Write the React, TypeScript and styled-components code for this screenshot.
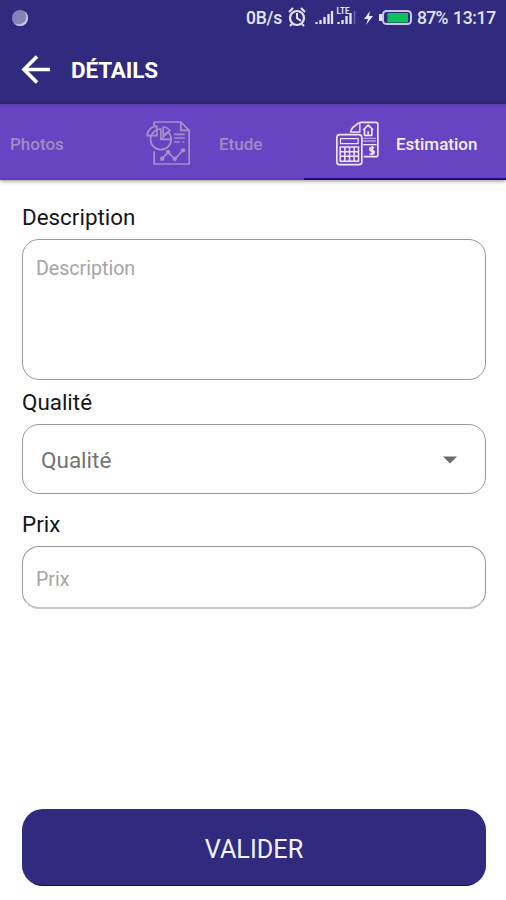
import React from "react";
import styled, { createGlobalStyle } from "styled-components";

const GlobalStyle = createGlobalStyle`
  * { box-sizing: border-box; }
  body { margin: 0; background: #fefefe; font-family: Roboto, "Liberation Sans", sans-serif; }
  button, textarea, input { font-family: inherit; }
`;

const Screen = styled.main`
  width: 506px;
  height: 900px;
  display: flex;
  flex-direction: column;
  overflow: hidden;
  background: #fefefe;
`;

const StatusBar = styled.div`
  height: 36px;
  flex: none;
  display: flex;
  align-items: center;
  padding: 0 11px 0 12px;
  background: #302b7e;
  color: #e6e5f6;
  font-size: 17.5px;
  font-weight: 500;
`;

const StatusDot = styled.span`
  width: 16px;
  height: 16px;
  margin-right: auto;
  border-radius: 50%;
  background: #8583b5;
  box-shadow: inset -1.5px -1.5px 1px #cfcfe8;
`;

const StatusText = styled.span<{ $width: number; $spacing?: number }>`
  width: ${(p) => p.$width}px;
  flex: none;
  white-space: nowrap;
  letter-spacing: ${(p) => p.$spacing ?? 0}px;
`;

const StatusIcons = styled.svg`
  width: 135px;
  height: 36px;
  flex: none;
`;

const AppBar = styled.header`
  height: 68px;
  flex: none;
  display: flex;
  align-items: center;
  padding-left: 21px;
  background: #302b7e;
`;

const BackButton = styled.button`
  width: 50px;
  height: 30px;
  padding: 0;
  border: 0;
  background: none;
  text-align: left;
  svg { display: block; }
`;

const Title = styled.h1`
  margin: 0;
  color: #fff;
  font-size: 22.5px;
  font-weight: 700;
  letter-spacing: -0.15px;
`;

const Tabs = styled.nav`
  height: 76px;
  flex: none;
  display: flex;
  background: linear-gradient(#5a3db0, #6745c2 4px);
  box-shadow: 0 1px 4px rgba(0, 0, 0, 0.45);
`;

const Tab = styled.div<{ $width: number; $indent: number; $active?: boolean }>`
  width: ${(p) => p.$width}px;
  flex: none;
  display: flex;
  align-items: center;
  padding: 4px 0 0 ${(p) => p.$indent}px;
  border-bottom: 2px solid ${(p) => (p.$active ? "#1c0c80" : "#5f3cc0")};
  color: ${(p) => (p.$active ? "#f4effd" : "#a18ac5")};
  font-size: 17px;
  font-weight: 500;
  white-space: nowrap;
`;

const TabLabel = styled.span`
  padding-top: 2px;
`;

const TabIcon = styled.svg<{ $gap: number }>`
  width: 45px;
  height: 46px;
  flex: none;
  margin-right: ${(p) => p.$gap}px;
`;

const Form = styled.form`
  flex: 1;
  display: flex;
  flex-direction: column;
  padding: 23px 21px 14px 22px;
`;

const Label = styled.label`
  height: 36px;
  padding-top: 1px;
  line-height: 26px;
  font-size: 22.4px;
  color: #161616;
`;

const Description = styled.textarea`
  width: 464px;
  height: 141px;
  padding: 17px 13px;
  border: 1px solid #999;
  border-radius: 17px;
  background: transparent;
  resize: none;
  font-size: 19.6px;
  line-height: 24px;
  &::placeholder { color: #a5a5a5; opacity: 1; }
`;

const Select = styled.div`
  height: 70px;
  width: 464px;
  display: flex;
  align-items: center;
  justify-content: space-between;
  padding: 2px 28px 0 18px;
  border: 1px solid #999;
  border-radius: 17px;
  color: #747474;
  font-size: 22.5px;
`;

const Price = styled.input`
  width: 464px;
  height: 63px;
  padding: 4px 13px 0;
  border: 1px solid #999;
  border-bottom: 2px solid #c4c4c4;
  border-radius: 17px;
  background: transparent;
  font-size: 19.6px;
  &::placeholder { color: #a5a5a5; opacity: 1; }
`;

const Field = styled.div<{ $height: number }>`
  height: ${(p) => p.$height}px;
  display: flex;
  flex-direction: column;
`;

const Submit = styled.button`
  width: 464px;
  height: 77px;
  margin-top: auto;
  padding: 4px 0 0;
  border: 0;
  border-bottom: 1px solid #160a69;
  border-radius: 21px;
  background: #302b7e;
  color: #f4f3ff;
  font-size: 25.2px;
`;

const StudyIcon = () => (
  <TabIcon $gap={28} viewBox="48 44 134 138" fill="none" stroke="#a78fc9" strokeWidth="5.2" strokeLinejoin="round">
    <path d="M72 62V50h80l25 25v101H72v-38M152 50v25h25" />
    <path d="M92 71a31 31 0 1 0 31 31H92z" />
    <path d="M92 102l22-22a31 31 0 0 1 9 22M99 90V65q14 1 20 11z" />
    <path d="M80 91H51q2-26 29-29z" />
    <path d="M132 87h32M132 98h32M132 110h18M157 110h5" />
    <path d="M96 160l18-19 20 20 24-26" />
    <g fill="#a78fc9" stroke="none">
      <circle cx="96" cy="160" r="6.5" /><circle cx="114" cy="140" r="6.5" />
      <circle cx="134" cy="161" r="6.5" /><circle cx="159" cy="135" r="6.5" />
    </g>
  </TabIcon>
);

const EstimateIcon = () => (
  <TabIcon $gap={16} viewBox="46 42 134 138" fill="none" stroke="#efe6fc" strokeWidth="5" strokeLinejoin="round">
    <rect x="51" y="86" width="75" height="90" rx="9" />
    <rect x="62" y="98" width="53" height="15" strokeWidth="3.5" />
    <path d="M61 123h55v43H61zM75 123v43M89 123v43M103 123v43M61 137h55M61 151h55" strokeWidth="4.5" />
    <path d="M92 80q2-14 13-20 11-11 20-11h43q6 0 6 6v91q0 6-6 6h-36" />
    <path d="M94 78h26V54" strokeWidth="4" />
    <path d="M130 72l15-15 15 15M134 70v18h22V70M145 76v9" />
    <path d="M130 97h38M130 105h38" strokeWidth="4" stroke="#b9a2e3" />
    <path d="M130 116h40" strokeWidth="4" />
    <path d="M163 125h-7q-6 0-6 4.5t6 4.5q7 0 7 5t-7 5h-7M157 120v28" />
  </TabIcon>
);

export default function App() {
  return (
    <Screen>
      <GlobalStyle />
      <StatusBar>
        <StatusDot />
        <StatusText $width={36} $spacing={-0.2}>0B/s</StatusText>
        <StatusIcons viewBox="282 0 135 36" fill="none" stroke="#e6e5f6">
          <circle cx="297" cy="18" r="7" strokeWidth="2.2" />
          <path d="M297 13v5l4 3M289 12l4-4M301 8l4 4M292 24l-2 2M302 24l2 2" strokeWidth="2" />
          <path d="M316.5 24v-2M320.5 24v-4M324.5 24v-7M328.5 24v-10M332 24V11" strokeWidth="2.3" />
          <path d="M338.5 24v-2M342.5 24v-4M346.5 24v-8M350.5 24V13" strokeWidth="2.3" />
          <path d="M354.5 24V11" stroke="#6b67a6" strokeWidth="1.5" />
          <text x="336.5" y="14" fill="#e6e5f6" stroke="none" fontSize="9.5" fontWeight="700" textLength="13" lengthAdjust="spacingAndGlyphs">LTE</text>
          <path d="M370 11l-6 8h4l-2 6 7-9h-4z" fill="#e6e5f6" stroke="none" />
          <rect x="383" y="11" width="28" height="13" rx="3.5" strokeWidth="2" stroke="#c9c9e6" />
          <rect x="387.5" y="13" width="20.5" height="9.5" fill="#0cc158" stroke="none" />
          <path d="M380.5 14v7" strokeWidth="3" />
        </StatusIcons>
        <StatusText $width={36} $spacing={-0.7}>87%</StatusText>
        <StatusText $width={42} $spacing={-0.3}>13:17</StatusText>
      </StatusBar>
      <AppBar>
        <BackButton type="button" aria-label="Retour">
          <svg width="30" height="30" viewBox="0 0 30 30" fill="none" stroke="#fff" strokeWidth="3.6">
            <path d="M29 14.5H3M16 1.5L3 14.5l13 13" />
          </svg>
        </BackButton>
        <Title>DÉTAILS</Title>
      </AppBar>
      <Tabs>
        <Tab $width={102} $indent={10}><TabLabel>Photos</TabLabel></Tab>
        <Tab $width={202} $indent={44}><StudyIcon /><TabLabel>Etude</TabLabel></Tab>
        <Tab $width={202} $indent={31} $active><EstimateIcon /><TabLabel>Estimation</TabLabel></Tab>
      </Tabs>
      <Form>
        <Field $height={185}>
          <Label htmlFor="description">Description</Label>
          <Description id="description" placeholder="Description" />
        </Field>
        <Field $height={122}>
          <Label>Qualité</Label>
          <Select>
            Qualité
            <svg width="14" height="8" viewBox="0 0 14 8"><path d="M0 .5h14L7 7.5z" fill="#6a6a6a" /></svg>
          </Select>
        </Field>
        <Field $height={99}>
          <Label htmlFor="price">Prix</Label>
          <Price id="price" placeholder="Prix" />
        </Field>
        <Submit type="button">VALIDER</Submit>
      </Form>
    </Screen>
  );
}
